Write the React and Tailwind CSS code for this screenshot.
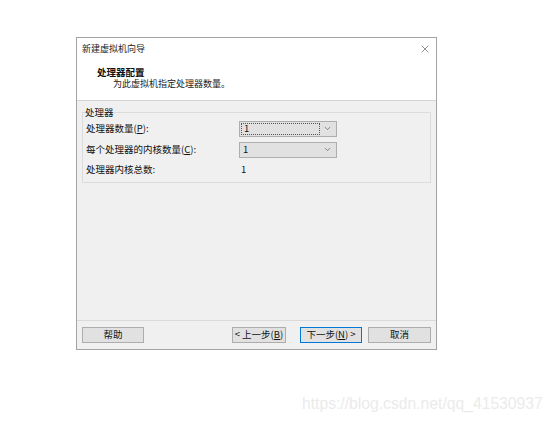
import { ChevronDown, X } from 'lucide-react';

const font = { fontFamily: '"Noto Sans CJK SC", "Noto Sans", sans-serif' };

const Combo = ({ value, focused }) => (
  <div className="w-[98px] h-[16px] bg-[#e1e1e1] border border-[#adadad] flex items-center pl-[1px] pr-[4px]">
    <div
      className={`flex-1 h-[12px] flex items-center pl-[2px] text-[9.5px] text-[#111] leading-none ${
        focused ? 'border border-dotted border-[#555] mr-[3px]' : ''
      }`}
    >
      {value}
    </div>
    <ChevronDown className="w-[9px] h-[9px] text-[#555]" strokeWidth={1.8} />
  </div>
);

const Btn = ({ children, primary, w }) => (
  <button
    className={`h-[16px] ${w} bg-[#e1e1e1] border text-[9.5px] leading-none text-[#111] flex items-center justify-center ${
      primary ? 'border-[#0078d7]' : 'border-[#adadad]'
    }`}
  >
    {children}
  </button>
);

export default function App() {
  return (
    <div className="w-[554px] h-[423px] bg-white relative overflow-hidden" style={font}>
      <div className="ml-[76px] pt-[37px]">
        <div className="w-[361px] h-[313px] border border-[#a3a3a3] flex flex-col bg-[#f0f0f0]">
          {/* header */}
          <div className="h-[63px] bg-white border-b border-[#d4d4d4] flex flex-col">
            <div className="h-[20px] flex items-center justify-between pl-[5px] pr-[5px] pt-[2px]">
              <span className="text-[9px] text-[#222]">新建虚拟机向导</span>
              <X className="w-[12px] h-[12px] text-[#333]" strokeWidth={1.1} />
            </div>
            <div className="pl-[20px] pt-[8px] text-[9.5px] font-bold text-[#111] leading-[12px]">处理器配置</div>
            <div className="pl-[36px] text-[9px] text-[#222] leading-[12px]">为此虚拟机指定处理器数量。</div>
          </div>

          {/* body */}
          <div className="flex-1 px-[5px] pt-[5px]">
            <fieldset className="border border-[#dcdcdc] h-[77px] px-[3px] pt-[1px] m-0">
              <legend className="text-[9.5px] text-[#111] leading-[12px] px-0 ml-[-1px]">处理器</legend>
              <div className="flex items-center h-[17px] mt-[1px]">
                <span className="w-[153px] text-[9.5px] text-[#111]">
                  处理器数量(<span className="underline">P</span>):
                </span>
                <Combo value="1" focused />
              </div>
              <div className="flex items-center h-[17px] mt-[4px]">
                <span className="w-[153px] text-[9.5px] text-[#111]">
                  每个处理器的内核数量(<span className="underline">C</span>):
                </span>
                <Combo value="1" />
              </div>
              <div className="flex items-center h-[17px] mt-[3px]">
                <span className="w-[155px] text-[9.5px] text-[#111]">处理器内核总数:</span>
                <span className="text-[9.5px] text-[#111]">1</span>
              </div>
            </fieldset>
          </div>

          {/* footer */}
          <div className="h-[29px] border-t border-[#dadada] flex items-start pt-[6px] px-[5px]">
            <Btn w="w-[62px]">帮助</Btn>
            <div className="ml-[88px]">
              <Btn w="w-[54px]">
                &lt; 上一步(<span className="underline">B</span>)
              </Btn>
            </div>
            <div className="ml-[14px]">
              <Btn w="w-[62px]" primary>
                下一步(<span className="underline">N</span>) &gt;
              </Btn>
            </div>
            <div className="ml-[6px]">
              <Btn w="w-[63px]">取消</Btn>
            </div>
          </div>
        </div>
      </div>

      <div
        className="absolute left-[302px] top-[394px] text-[15.7px] text-[#ebebeb] leading-[20px]"
        style={{ fontFamily: '"Liberation Sans", Arial, sans-serif' }}
      >
        https://blog.csdn.net/qq_41530937
      </div>
    </div>
  );
}
